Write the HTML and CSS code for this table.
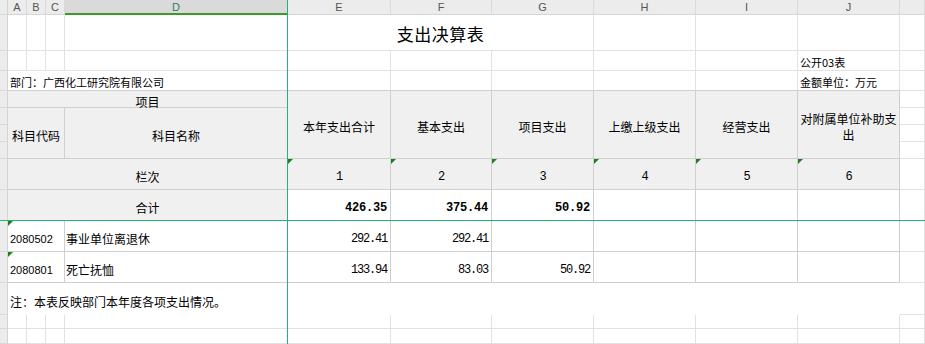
FILE: index.html
```html
<!DOCTYPE html>
<html lang="zh-CN">
<head>
    <meta charset="UTF-8">
    <title>支出决算表</title>
    <link rel="stylesheet" href="styles.css">
</head>
<body>
    <div class="sheet">
        <!-- encabezado de columnas -->
        <div class="rn corner"></div>
        <div class="ch">A</div>
        <div class="ch">B</div>
        <div class="ch">C</div>
        <div class="ch sel">D</div>
        <div class="ch">E</div>
        <div class="ch">F</div>
        <div class="ch">G</div>
        <div class="ch">H</div>
        <div class="ch">I</div>
        <div class="ch">J</div>
        <div class="ch"></div>

        <!-- fila 1: titulo -->
        <div class="rn"></div>
        <div class="c"></div><div class="c"></div><div class="c"></div><div class="c"></div>
        <div class="c s3 title">支出决算表</div>
        <div class="c"></div><div class="c"></div><div class="c"></div>
        <div class="c"></div>

        <!-- fila 2 -->
        <div class="rn"></div>
        <div class="c"></div><div class="c"></div><div class="c"></div><div class="c"></div>
        <div class="c"></div><div class="c"></div><div class="c"></div><div class="c"></div><div class="c"></div>
        <div class="c info">公开03表</div>
        <div class="c"></div>

        <!-- fila 3 -->
        <div class="rn"></div>
        <div class="c s4 info edge">部门：广西化工研究院有限公司</div>
        <div class="c edge"></div><div class="c edge"></div><div class="c edge"></div><div class="c edge"></div><div class="c edge"></div>
        <div class="c info edge">金额单位：万元</div>
        <div class="c"></div>

        <!-- cabecera de la tabla -->
        <div class="rn"></div>
        <div class="c hd s4">项目</div>
        <div class="c hd r4">本年支出合计</div>
        <div class="c hd r4">基本支出</div>
        <div class="c hd r4">项目支出</div>
        <div class="c hd r4">上缴上级支出</div>
        <div class="c hd r4">经营支出</div>
        <div class="c hd r4 wrap">对附属单位补助支出</div>
        <div class="c"></div>

        <div class="rn"></div>
        <div class="c hd s3 r3">科目代码</div>
        <div class="c hd r3">科目名称</div>
        <div class="c"></div>

        <div class="rn"></div>
        <div class="c"></div>

        <div class="rn"></div>
        <div class="c"></div>

        <div class="rn"></div>
        <div class="c hd s4">栏次</div>
        <div class="c hd num mark">1</div>
        <div class="c hd num mark">2</div>
        <div class="c hd num mark">3</div>
        <div class="c hd num mark">4</div>
        <div class="c hd num mark">5</div>
        <div class="c hd num mark">6</div>
        <div class="c"></div>

        <div class="rn"></div>
        <div class="c hd s4">合计</div>
        <div class="c td num right b">426.35</div>
        <div class="c td num right b">375.44</div>
        <div class="c td num right b">50.92</div>
        <div class="c td"></div><div class="c td"></div><div class="c td"></div>
        <div class="c"></div>

        <!-- datos -->
        <div class="rn"></div>
        <div class="c td s3 code mark">2080502</div>
        <div class="c td name">事业单位离退休</div>
        <div class="c td num right">292.41</div>
        <div class="c td num right">292.41</div>
        <div class="c td"></div><div class="c td"></div><div class="c td"></div><div class="c td"></div>
        <div class="c"></div>

        <div class="rn"></div>
        <div class="c td s3 code mark">2080801</div>
        <div class="c td name">死亡抚恤</div>
        <div class="c td num right">133.94</div>
        <div class="c td num right">83.03</div>
        <div class="c td num right">50.92</div>
        <div class="c td"></div><div class="c td"></div><div class="c td"></div>
        <div class="c"></div>

        <div class="rn"></div>
        <div class="c s10 note">注：本表反映部门本年度各项支出情况。</div>
        <div class="c"></div>

        <div class="rn"></div>
        <div class="c"></div><div class="c"></div><div class="c"></div><div class="c"></div><div class="c"></div><div class="c"></div>
        <div class="c"></div><div class="c"></div><div class="c"></div><div class="c"></div><div class="c"></div>

        <div class="rn"></div>
        <div class="c"></div><div class="c"></div><div class="c"></div><div class="c"></div><div class="c"></div><div class="c"></div>
        <div class="c"></div><div class="c"></div><div class="c"></div><div class="c"></div><div class="c"></div>

        <!-- lineas de inmovilizar paneles -->
        <div class="freeze-v"></div>
        <div class="freeze-h"></div>
    </div>
</body>
</html>
```

FILE: styles.css
```css
:root {
    --cabecera: #ececec;
    --linea: #e2e2e2;
    --linea-tabla: #cfcfcf;
    --fondo-hd: #f0f0f0;
    --verde: #22b27a;
}

body {
    margin: 0;
    font-family: "Noto Sans CJK SC", "Liberation Sans", sans-serif;
    color: #000;
    background: #fff;
}

.sheet {
    position: relative;
    width: 925px;
    height: 344px;
    overflow: hidden;
    display: grid;
    grid-template-columns: 8px 19px 19px 19px 223px 103px 101px 102px 102px 102px 102px 1fr;
    grid-template-rows: 15px 36px 20px 20px 17px 17px 17px 17px 31px 31px 31px 31px 32px 14px 15px;
}

.sheet > div {
    box-sizing: border-box;
    min-width: 0;
}

.c {
    position: relative;
    display: flex;
    align-items: center;
    border-right: 1px solid var(--linea);
    border-bottom: 1px solid var(--linea);
    font-size: 12px;
    white-space: nowrap;
}

.rn {
    background: var(--cabecera);
    border-right: 1px solid #d4d4d4;
    border-bottom: 1px solid #d8d8d8;
}

.ch {
    display: flex;
    align-items: center;
    justify-content: center;
    background: var(--cabecera);
    border-right: 1px solid #dadada;
    border-bottom: 1px solid #d6d6d6;
    font-family: "Liberation Sans", sans-serif;
    font-size: 11px;
    color: #555;
}

    .ch.sel {
        background: #dadada;
        border-bottom: 2px solid #3c9a2c;
        color: #2f7d5b;
    }

.s3 { grid-column: span 3; }
.s4 { grid-column: span 4; }
.s10 { grid-column: span 10; }
.r3 { grid-row: span 3; }
.r4 { grid-row: span 4; }

.title {
    justify-content: center;
    padding-top: 2px;
    font-size: 17px;
    letter-spacing: 0.5px;
}

.info {
    align-items: flex-end;
    padding: 0 0 1px 2px;
    font-size: 11px;
    line-height: 14px;
}

.edge {
    border-bottom-color: var(--linea-tabla);
}

.hd, .td {
    padding-top: 5px;
    border-right-color: var(--linea-tabla);
    border-bottom-color: var(--linea-tabla);
    line-height: 16px;
}

.hd {
    background: var(--fondo-hd);
    justify-content: center;
    text-align: center;
}

    .hd.wrap {
        white-space: normal;
        padding: 5px 1px 0;
    }

.td {
    background: #fff;
}

.num {
    font-family: "Liberation Mono", monospace;
    font-size: 12px;
    letter-spacing: -1.2px;
}

    .num.right {
        justify-content: flex-end;
        padding-right: 3px;
    }

    .num.b {
        font-weight: bold;
        letter-spacing: -0.2px;
    }

.code {
    padding-left: 2px;
    font-family: "Liberation Sans", sans-serif;
    font-size: 11px;
}

.name {
    padding-left: 1px;
}

.note {
    border: none;
    padding: 5px 0 0 2px;
}

/* triangulito verde de "numero como texto" */
.mark::before {
    content: "";
    position: absolute;
    top: 0;
    left: 0;
    border-top: 5px solid #1b7f1b;
    border-right: 5px solid transparent;
}

.freeze-v {
    position: absolute;
    left: 287px;
    top: 0;
    bottom: 0;
    width: 1px;
    background: var(--verde);
}

.freeze-h {
    position: absolute;
    left: 0;
    right: 0;
    top: 220px;
    height: 1px;
    background: var(--verde);
}
```
